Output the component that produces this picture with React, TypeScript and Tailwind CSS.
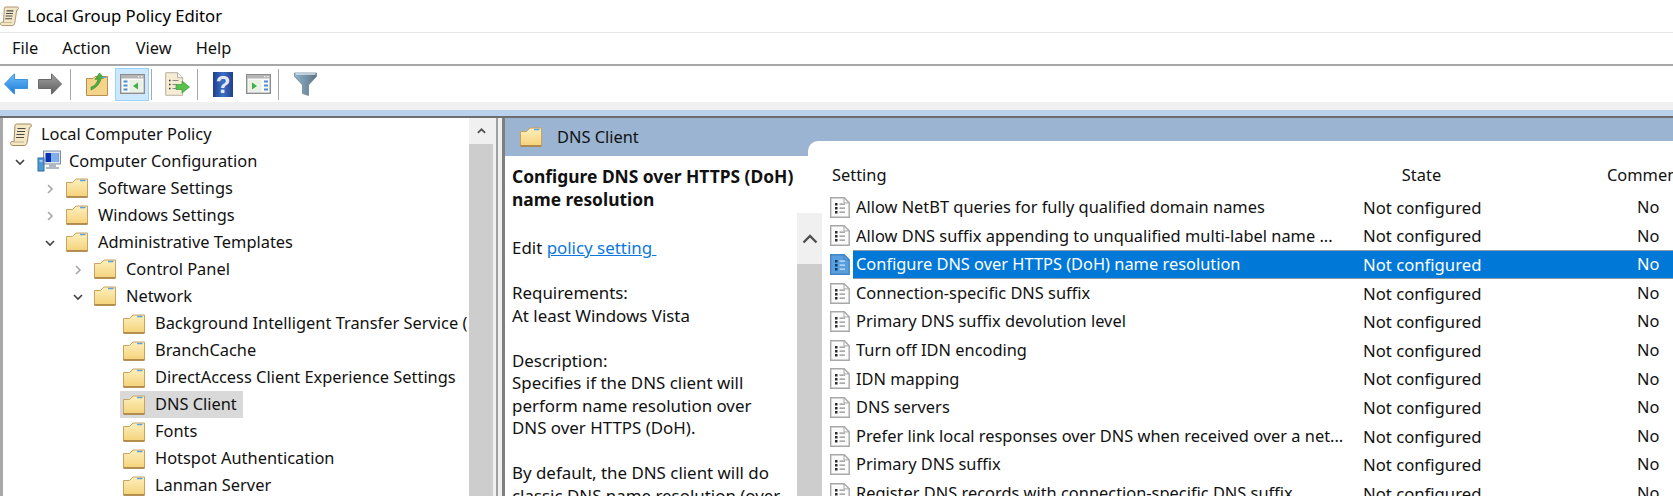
import { useId } from "react";

const FONT = "font-['Noto_Sans','Open_Sans',sans-serif]";

function ScrollIcon({ className }: { className: string }) {
  return (
    <svg viewBox="0 0 22 24" className={className}>
      <path d="M5 2.500c0-1 .8-1.500 1.700-1.500H20c1.200 0 1.700 1 1.400 2-.3.900-1 1.400-2 1.400l-2.300 15c-.2 1.800-1.300 3.100-3 3.100H3c-1.500 0-2.500-1-2.500-2.200 0-1 .8-1.800 1.900-1.800H4z" fill="#f3e7c6" stroke="#a08a5e" strokeWidth="1" />
      <path d="M7.500 5.500h8M7 8.500h8M6.500 11.500h8M6 14.500h8" stroke="#4b4b4b" strokeWidth="1.200" />
      <path d="M2.500 19h11.500" stroke="#c7b288" strokeWidth="1" />
    </svg>
  );
}

function FolderIcon({ className = "w-[22px] h-[20px] shrink-0" }: { className?: string }) {
  const id = useId();
  return (
    <svg viewBox="0 0 22 20" className={className}>
      <defs>
        <linearGradient id={id} x1="0" y1="0" x2="0" y2="1">
          <stop offset="0" stopColor="#fdf0bd" />
          <stop offset="1" stopColor="#f5d27a" />
        </linearGradient>
      </defs>
      <path d="M.5 4.500h6L10 1h11.500v18H.5z" fill={`url(#${id})`} stroke="#c9a25e" strokeWidth="1" />
      <path d="M14 2.500h5.500" stroke="#5aa2e0" strokeWidth="1.500" />
      <path d="M.5 19h21" stroke="#a67c3e" strokeWidth="1.500" />
    </svg>
  );
}

function PolicyIcon({ selected = false }: { selected?: boolean }) {
  const fill = selected ? "#5a9fdd" : "#fbfbfb";
  const stroke = selected ? "#3f86c9" : "#a8a8a8";
  const ink = selected ? "#0e3c6a" : "#2c2c2c";
  const line = selected ? "#cfe4f7" : "#8f8f8f";
  return (
    <svg viewBox="0 0 20 21" className="w-[20px] h-[21px] shrink-0">
      <path d="M.7.700h13.500l5 5v14.600H.7z" fill={fill} stroke={stroke} strokeWidth="1.400" />
      <path d="M14 .7v5.200h5.200" fill="none" stroke={stroke} strokeWidth="1" />
      <rect x="5" y="6" width="2.500" height="2.500" fill={ink} />
      <rect x="5" y="10" width="2.500" height="2.500" fill={ink} />
      <rect x="5" y="14" width="2.500" height="2.500" fill={ink} />
      <path d="M9.500 7.200h5.500M9.500 11.200h5.500M9.500 15.200h5.500" stroke={line} strokeWidth="1.200" />
    </svg>
  );
}

function ComputerIcon() {
  return (
    <svg viewBox="0 0 24 22" className="w-[24px] h-[22px] shrink-0">
      <rect x="6.500" y="1" width="17" height="13" fill="#dfe6ee" stroke="#7c8ea3" />
      <rect x="8.500" y="3" width="13" height="9" fill="#0a2fb0" />
      <path d="M14 3h7.500v9H14z" fill="#7fb0ea" />
      <path d="M12 14h7v3h3v2H9v-2h3z" fill="#aeb8c4" />
      <rect x="1" y="8" width="6" height="13" fill="#4f9ad4" stroke="#2f6d9e" />
      <path d="M2.500 11h3" stroke="#fff" />
    </svg>
  );
}

function ArrowIcon({ dir }: { dir: "left" | "right" }) {
  const id = useId();
  const blue = dir === "left";
  return (
    <svg viewBox="0 0 24 22" className="w-[24px] h-[22px]">
      <defs>
        <linearGradient id={id} x1="0" y1="0" x2="0" y2="1">
          <stop offset="0" stopColor={blue ? "#6cc0fa" : "#a2a2a2"} />
          <stop offset="1" stopColor={blue ? "#1e78d6" : "#5c5c5c"} />
        </linearGradient>
      </defs>
      <path
        d={blue ? "M.5 11 10.500.8v5.700H23.500v9H10.500v5.700z" : "M23.500 11 13.500.8v5.700H.5v9h13v5.700z"}
        fill={`url(#${id})`}
        stroke={blue ? "#3a93e4" : "#6a6a6a"}
        strokeWidth="1"
      />
    </svg>
  );
}

function PanelIcon({ right = false }: { right?: boolean }) {
  return (
    <svg viewBox="0 0 25 20" className="w-[25px] h-[20px]">
      <rect x=".7" y=".7" width="23.600" height="18.600" fill="#fbfbfb" stroke="#8c8c8c" strokeWidth="1.400" />
      <rect x="1" y="1" width="23" height="3.500" fill="#b5b5b5" />
      <path d="M18 2.700h1.500M21 2.700h1.500" stroke="#fff" />
      {right ? (
        <>
          <rect x="2.500" y="6" width="13" height="12" fill="#e9f1e4" />
          <path d="M6 8.500 11 12l-5 3.500z" fill="#3fae4a" />
          <path d="M18 7.500h4M18 11.500h4M18 15.500h4" stroke="#4a8fd0" strokeWidth="2" />
        </>
      ) : (
        <>
          <rect x="9.500" y="6" width="13" height="12" fill="#e9f1e4" />
          <path d="M18 8.500 13 12l5 3.500z" fill="#3fae4a" />
          <path d="M3.500 7.500h4M3.500 11.500h4M3.500 15.500h4" stroke="#4a8fd0" strokeWidth="2" />
        </>
      )}
    </svg>
  );
}

function UpFolderIcon() {
  return (
    <svg viewBox="0 0 22 24" className="w-[22px] h-[24px]">
      <path d="M.5 6.500h6.500L9 4.500h12.500v19H.5z" fill="#f4d48a" stroke="#b98f4e" />
      <path d="M5 15c4-1 6-4 7-8l-3 .5L13.500 1 18 6l-3 .5C14.500 11 10 16 5 18z" fill="#4fae3f" stroke="#2f8a2a" strokeWidth=".6" />
      <path d="M16 5.500h4.500" stroke="#6aa7dd" />
    </svg>
  );
}

function ExportIcon() {
  return (
    <svg viewBox="0 0 25 24" className="w-[25px] h-[24px]">
      <path d="M.7.700h12l5 5v17.600H.7z" fill="#f6ecd4" stroke="#b9b2a2" />
      <path d="M12.500.700v5h5" fill="#fff" stroke="#b9b2a2" />
      <path d="M4 8.500h1.500M4 12.500h1.500M4 16.500h1.500" stroke="#333" strokeWidth="1.500" />
      <path d="M7.500 8.500h6M7.500 12.500h4M7.500 16.500h4" stroke="#8a8a8a" />
      <path d="M11 12.500h6V9l7.500 6-7.500 6v-3.500h-6z" fill="#57c14e" stroke="#38983a" strokeWidth=".7" />
    </svg>
  );
}

function HelpIcon() {
  const id = useId();
  return (
    <svg viewBox="0 0 20 25" className="w-[20px] h-[25px]">
      <defs>
        <linearGradient id={id} x1="0" y1="0" x2="1" y2="0">
          <stop offset="0" stopColor="#1d3f8f" />
          <stop offset=".5" stopColor="#3f6fc4" />
          <stop offset="1" stopColor="#1d3f8f" />
        </linearGradient>
      </defs>
      <rect width="20" height="25" fill={`url(#${id})`} />
      <text x="10" y="20.500" textAnchor="middle" fontFamily="'Liberation Sans',sans-serif" fontWeight="700" fontSize="24" fill="#e4eaf5">?</text>
    </svg>
  );
}

function FilterIcon() {
  const id = useId();
  return (
    <svg viewBox="0 0 23 24" className="w-[23px] h-[24px]">
      <defs>
        <linearGradient id={id} x1="0" y1="0" x2="1" y2="0">
          <stop offset="0" stopColor="#8fb4cc" />
          <stop offset="1" stopColor="#5c7384" />
        </linearGradient>
      </defs>
      <path d="M.5 1h22v3.500L14.500 13v10.500l-6-2V13L.5 4.500z" fill={`url(#${id})`} stroke="#6f8698" strokeWidth=".8" />
      <path d="M1.500 2h20" stroke="#d9e6ee" strokeWidth="1.500" />
    </svg>
  );
}

function Chevron({ open }: { open: boolean }) {
  return (
    <svg viewBox="0 0 10 10" className="w-[10px] h-[10px]">
      <path
        d={open ? "M1 3l4 4 4-4" : "M3 1l4 4-4 4"}
        fill="none"
        stroke={open ? "#404040" : "#a6a6a6"}
        strokeWidth="1.600"
      />
    </svg>
  );
}

function ScrollUp({ big = false }: { big?: boolean }) {
  return (
    <svg viewBox="0 0 16 10" className={big ? "w-[16px] h-[10px]" : "w-[9px] h-[6px]"}>
      <path d="M1.500 8.500 8 2l6.500 6.500" fill="none" stroke="#505050" strokeWidth={big ? 2.400 : 3} />
    </svg>
  );
}

type TreeItem = { label: string; level: 0 | 1 | 2 | 3 | 4; chevron?: "open" | "closed"; selected?: boolean };

const treeItems: TreeItem[] = [
  { label: "Local Computer Policy", level: 0 },
  { label: "Computer Configuration", level: 1, chevron: "open" },
  { label: "Software Settings", level: 2, chevron: "closed" },
  { label: "Windows Settings", level: 2, chevron: "closed" },
  { label: "Administrative Templates", level: 2, chevron: "open" },
  { label: "Control Panel", level: 3, chevron: "closed" },
  { label: "Network", level: 3, chevron: "open" },
  { label: "Background Intelligent Transfer Service (", level: 4 },
  { label: "BranchCache", level: 4 },
  { label: "DirectAccess Client Experience Settings", level: 4 },
  { label: "DNS Client", level: 4, selected: true },
  { label: "Fonts", level: 4 },
  { label: "Hotspot Authentication", level: 4 },
  { label: "Lanman Server", level: 4 },
];

const indent: Record<number, string> = {
  0: "pl-[7px]",
  1: "pl-[12px]",
  2: "pl-[42px]",
  3: "pl-[70px]",
  4: "pl-[117px]",
};

function TreeRow({ item }: { item: TreeItem }) {
  if (item.level === 0) {
    return (
      <div className={`h-[27px] flex items-center whitespace-nowrap ${indent[0]}`}>
        <ScrollIcon className="w-[22px] h-[24px] shrink-0" />
        <span className="ml-[9px]">{item.label}</span>
      </div>
    );
  }
  if (item.level === 4) {
    return (
      <div className={`h-[27px] flex items-center whitespace-nowrap ${indent[4]}`}>
        <div className={`h-[27px] flex items-center pl-[3px] pr-[6px] ${item.selected ? "bg-[#d9d9d9]" : ""}`}>
          <FolderIcon />
          <span className="ml-[10px]">{item.label}</span>
        </div>
      </div>
    );
  }
  return (
    <div className={`h-[27px] flex items-center whitespace-nowrap ${indent[item.level]}`}>
      <span className="w-[10px] flex justify-center shrink-0">
        <Chevron open={item.chevron === "open"} />
      </span>
      {item.level === 1 ? (
        <span className="ml-[12px] flex items-center">
          <ComputerIcon />
          <span className="ml-[8px]">{item.label}</span>
        </span>
      ) : (
        <span className="ml-[11px] flex items-center">
          <FolderIcon />
          <span className="ml-[10px]">{item.label}</span>
        </span>
      )}
    </div>
  );
}

const settings = [
  "Allow NetBT queries for fully qualified domain names",
  "Allow DNS suffix appending to unqualified multi-label name ...",
  "Configure DNS over HTTPS (DoH) name resolution",
  "Connection-specific DNS suffix",
  "Primary DNS suffix devolution level",
  "Turn off IDN encoding",
  "IDN mapping",
  "DNS servers",
  "Prefer link local responses over DNS when received over a net...",
  "Primary DNS suffix",
  "Register DNS records with connection-specific DNS suffix",
];

export default function App() {
  return (
    <div className={`w-[1673px] h-[496px] overflow-hidden flex flex-col bg-white text-[16.4px] text-[#111] ${FONT}`}>
      {/* Title bar */}
      <div className="h-[33px] shrink-0 flex items-center border-b border-[#e6e6e6]">
        <ScrollIcon className="w-[19px] h-[23px] shrink-0" />
        <span className="ml-[8px] text-[16.7px] text-black">Local Group Policy Editor</span>
      </div>

      {/* Menu bar */}
      <div className="h-[33px] shrink-0 flex items-center border-b-2 border-[#a8a8a8]">
        <span className="ml-[12px]">File</span>
        <span className="ml-[24px]">Action</span>
        <span className="ml-[25px]">View</span>
        <span className="ml-[24px]">Help</span>
      </div>

      {/* Toolbar */}
      <div className="h-[36px] shrink-0 flex items-center">
        <span className="ml-[4px] flex"><ArrowIcon dir="left" /></span>
        <span className="ml-[10px] flex"><ArrowIcon dir="right" /></span>
        <span className="ml-[8px] w-px h-[31px] bg-[#a8a8a8]" />
        <span className="ml-[15px] flex"><UpFolderIcon /></span>
        <span className="ml-[7px] w-[34px] h-[33px] flex items-center justify-center bg-[#cce8ff] border border-[#99d1ff]">
          <PanelIcon />
        </span>
        <span className="ml-[2px] w-px h-[31px] bg-[#a8a8a8]" />
        <span className="ml-[13px] flex"><ExportIcon /></span>
        <span className="ml-[7px] w-px h-[31px] bg-[#a8a8a8]" />
        <span className="ml-[15px] flex"><HelpIcon /></span>
        <span className="ml-[13px] flex"><PanelIcon right /></span>
        <span className="ml-[7px] w-px h-[31px] bg-[#a8a8a8]" />
        <span className="ml-[15px] flex"><FilterIcon /></span>
      </div>

      <div className="h-[8px] shrink-0 bg-[#f0f0f0]" />
      <div className="h-[6px] shrink-0 bg-[#b9d1ea]" />

      {/* Main area */}
      <div className="flex-1 min-h-0 flex border-t-2 border-[#6d6d6d]">
        {/* Tree pane */}
        <div className="w-[493px] shrink-0 flex border-l-[3px] border-[#a8a8a8] text-[16.4px]">
          <div className="flex-1 min-w-0 overflow-hidden pt-[3px]">
            {treeItems.map((item) => (
              <TreeRow key={item.label} item={item} />
            ))}
          </div>
          <div className="w-[24px] shrink-0 flex flex-col bg-[#cdcdcd]">
            <div className="h-[26px] bg-[#f0f0f0] flex items-center justify-center">
              <ScrollUp />
            </div>
          </div>
        </div>

        {/* Splitter */}
        <div className="w-[9px] shrink-0 bg-[#f0f0f0]">
          <div className="ml-[3px] h-full w-[2px] bg-[#a0a0a0]" />
        </div>

        {/* Detail pane */}
        <div className="flex-1 min-w-0 flex flex-col border-l-[3px] border-[#7f7f7f]">
          <div className="h-[38px] shrink-0 flex items-center bg-[#9ab4d2] pl-[15px]">
            <FolderIcon />
            <span className="ml-[15px]">DNS Client</span>
          </div>
          <div className="flex-1 min-h-0 flex">
            {/* Extended description */}
            <div className="w-[292px] shrink-0 pl-[7px] pt-[9px] text-[16.9px] leading-[22.5px] whitespace-nowrap overflow-hidden">
              <div className="font-bold text-[17.4px]">Configure DNS over HTTPS (DoH)</div>
              <div className="font-bold text-[17.4px]">name resolution</div>
              <div className="mt-[27px]">
                Edit <span className="text-[#0a78e0] underline">policy setting&nbsp;</span>
              </div>
              <div className="mt-[22.5px]">Requirements:</div>
              <div>At least Windows Vista</div>
              <div className="mt-[22.5px]">Description:</div>
              <div>Specifies if the DNS client will</div>
              <div>perform name resolution over</div>
              <div>DNS over HTTPS (DoH).</div>
              <div className="mt-[22.5px]">By default, the DNS client will do</div>
              <div>classic DNS name resolution (over</div>
            </div>

            <div className="w-[25px] shrink-0 pt-[57px] flex flex-col relative z-20">
              <div className="h-[51px] shrink-0 bg-[#f0f0f0] flex items-center justify-center">
                <ScrollUp big />
              </div>
              <div className="flex-1 bg-[#cdcdcd]" />
            </div>

            {/* Settings list, its white tab reaches back over the blue header */}
            <div className="flex-1 min-w-0 -mt-[15px] -ml-[14px] relative z-10 bg-white rounded-tl-[10px] pl-[22px]">
              <div className="mt-[16px] h-[36px] flex items-center whitespace-nowrap">
                <span className="w-[517px] shrink-0 pl-[2px]">Setting</span>
                <span className="w-px h-[35px] bg-[#e5e5e5]" />
                <span className="w-[149px] shrink-0 text-center">State</span>
                <span className="w-px h-[35px] bg-[#e5e5e5]" />
                <span className="ml-[111px]">Comment</span>
              </div>
              {settings.map((name, i) => {
                const selected = i === 2;
                return (
                  <div key={name} className="h-[28.6px] flex items-center whitespace-nowrap">
                    <PolicyIcon selected={selected} />
                    <div
                      className={`ml-[3px] flex-1 h-full flex items-center pl-[3px] ${
                        selected ? "bg-[#0078d7] text-white border-y border-[#8a9bac]" : ""
                      }`}
                    >
                      <span className="w-[507px] shrink-0 overflow-hidden">{name}</span>
                      <span className="w-[274px] shrink-0 text-[16.7px]">Not configured</span>
                      <span>No</span>
                    </div>
                  </div>
                );
              })}
            </div>
          </div>
        </div>
      </div>
    </div>
  );
}
